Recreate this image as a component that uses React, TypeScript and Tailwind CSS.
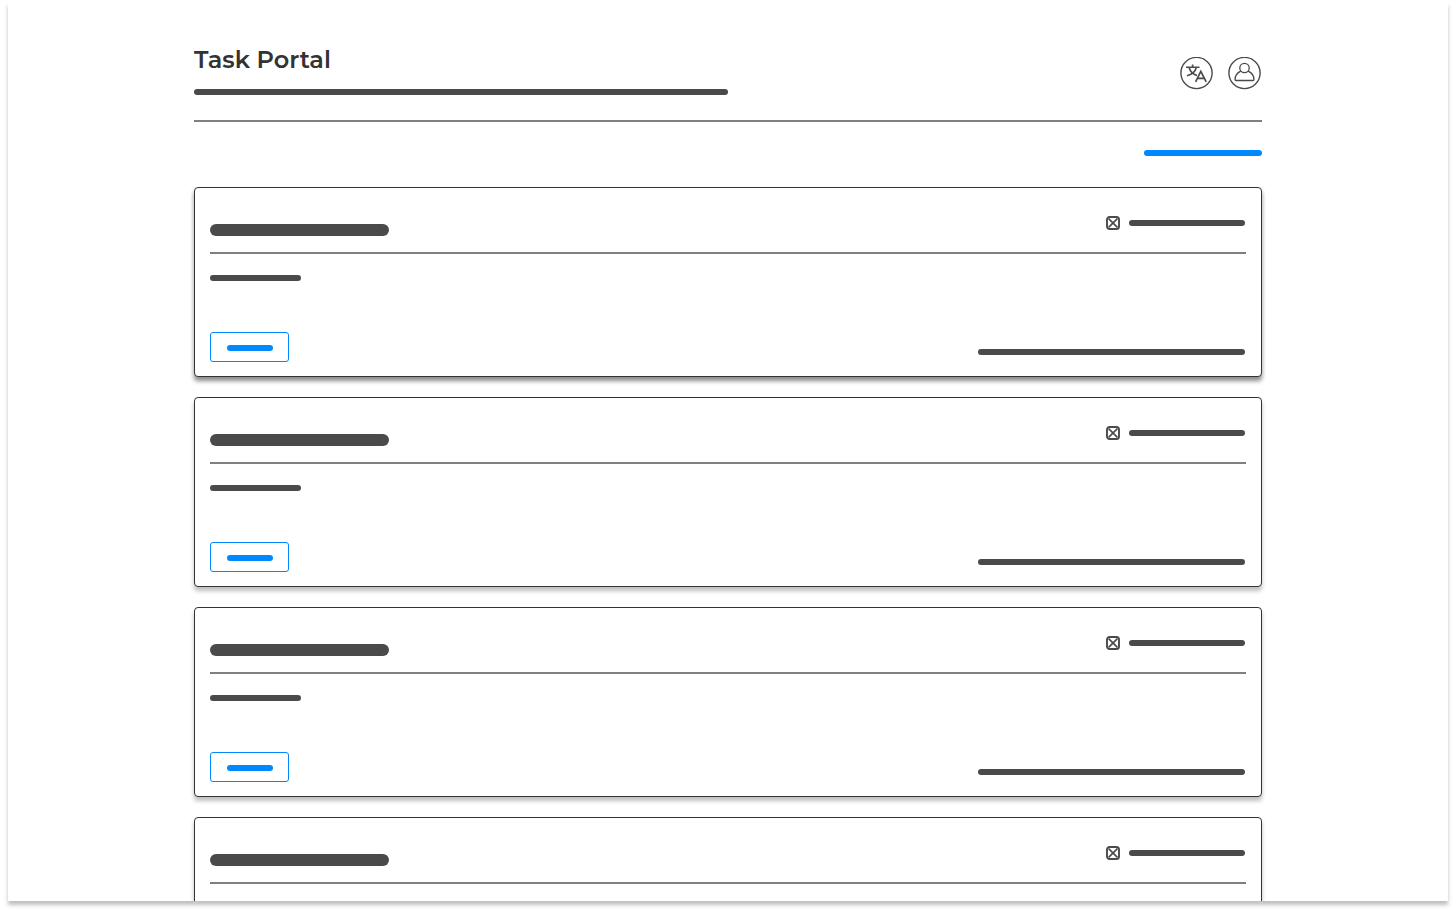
import React from "react";

function TranslateIcon() {
  return (
    <svg viewBox="0 0 33 33" className="size-[33px]" fill="none" stroke="#4a4a4a" aria-hidden="true">
      <circle cx="16.5" cy="16" r="15.6" strokeWidth="1.4" />
      <path d="M6 10.2H19.5M12.6 7.4V10.2M9 10.2C10 13.8 13.2 17.2 17 18.4M16.4 10.2C15.4 14.2 11.4 17.6 7 18.8" strokeWidth="1.6" />
      <path d="M15.6 24.8L20.8 14.4L26.2 24.8M17.4 21.3H24.4" strokeWidth="1.7" />
    </svg>
  );
}

function UserIcon() {
  return (
    <svg viewBox="0 0 33 33" className="size-[33px]" fill="none" stroke="#4a4a4a" aria-hidden="true">
      <circle cx="16.5" cy="16" r="15.6" strokeWidth="1.4" />
      <circle cx="16.5" cy="11" r="4.7" strokeWidth="1.3" />
      <path d="M12.8 14.2C9.4 15.8 7.1 18.8 7.1 22.4V22.8C7.1 23.2 7.4 23.5 7.8 23.5H25.2C25.6 23.5 25.9 23.2 25.9 22.8V22.4C25.9 18.8 23.6 15.8 20.2 14.2" strokeWidth="1.3" />
    </svg>
  );
}

function CrossedBoxIcon() {
  return (
    <svg viewBox="0 0 14 14" className="size-3.5" fill="none" stroke="#4a4a4a" aria-hidden="true">
      <rect x="1" y="1" width="12" height="12" rx="2.6" strokeWidth="1.9" />
      <path d="M2.6 2.6L11.4 11.4M11.4 2.6L2.6 11.4" strokeWidth="1.6" />
    </svg>
  );
}

function TaskCard({ active = false }: { active?: boolean }) {
  return (
    <article
      className={`flex h-[190px] shrink-0 flex-col rounded border border-[#333333] bg-white px-[15px] pb-[14px] pt-7 ${
        active ? "shadow-[0_4px_4px_rgba(50,40,50,0.55)]" : "shadow-[0_4px_4px_rgba(0,0,0,0.25)]"
      }`}
    >
      <div className="flex h-9 items-start justify-between pr-px">
        <div className="mt-2 h-3 w-[179px] rounded-full bg-[#4a4a4a]" />
        <div className="flex items-center gap-[9px]">
          <CrossedBoxIcon />
          <div className="h-1.5 w-[116px] rounded-full bg-[#4a4a4a]" />
        </div>
      </div>
      <hr className="h-0.5 border-0 bg-[#808080]" />
      <div className="mt-[21px] h-1.5 w-[91px] rounded-full bg-[#4a4a4a]" />
      <div className="mt-auto flex items-end justify-between pr-px">
        <button
          type="button"
          aria-label="Open task"
          className="flex h-[30px] w-[79px] items-center justify-center rounded-[3px] border border-[#0088ff]"
        >
          <span className="mt-0.5 h-1.5 w-[46px] rounded-full bg-[#0088ff]" />
        </button>
        <div className="mb-[7px] h-1.5 w-[267px] rounded-full bg-[#4a4a4a]" />
      </div>
    </article>
  );
}

export default function App() {
  return (
    <div className="flex h-screen flex-col bg-white px-2 pb-[9px] pt-0.5 font-['Montserrat','Inter',sans-serif]">
      <div className="min-h-0 flex-1 shadow-[0_4px_4px_rgba(0,0,0,0.25)]">
        <main className="h-full overflow-hidden bg-white px-6">
          <div className="mx-auto flex max-w-[1068px] flex-col">
            <header className="flex justify-between border-b-2 border-[#808080] pb-[25px] pt-10">
              <div className="w-1/2">
                <h1 className="pt-0.5 text-2xl font-semibold text-[#333333]">Task Portal</h1>
                <div className="mt-[13px] h-1.5 rounded-full bg-[#4a4a4a]" />
              </div>
              <nav aria-label="Account" className="flex items-start gap-[15px] pr-px pt-[15px]">
                <button type="button" aria-label="Change language" className="rounded-full">
                  <TranslateIcon />
                </button>
                <button type="button" aria-label="Profile" className="rounded-full">
                  <UserIcon />
                </button>
              </nav>
            </header>
            <a
              href="#all"
              aria-label="View all"
              className="mb-[31px] mt-7 h-1.5 w-[118px] self-end rounded-full bg-[#0088ff]"
            />
            <section aria-label="Tasks" className="flex flex-col gap-5">
              <TaskCard active />
              <TaskCard />
              <TaskCard />
              <TaskCard />
            </section>
          </div>
        </main>
      </div>
    </div>
  );
}
